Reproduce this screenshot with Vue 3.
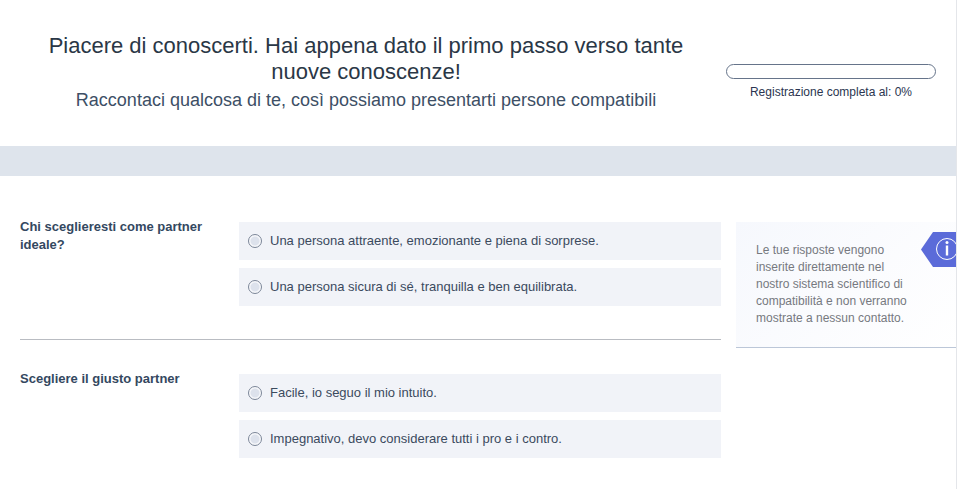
<script setup>
// domande del questionario
const questions = [
  {
    title: 'Chi sceglieresti come partner ideale?',
    answers: [
      'Una persona attraente, emozionante e piena di sorprese.',
      'Una persona sicura di sé, tranquilla e ben equilibrata.'
    ]
  },
  {
    title: 'Scegliere il giusto partner',
    answers: [
      'Facile, io seguo il mio intuito.',
      'Impegnativo, devo considerare tutti i pro e i contro.'
    ]
  }
]
</script>

<template>
  <div class="page">
    <header class="head">
      <div class="head-text">
        <h1>Piacere di conoscerti. Hai appena dato il primo passo verso tante nuove conoscenze!</h1>
        <h2>Raccontaci qualcosa di te, così possiamo presentarti persone compatibili</h2>
      </div>
      <div class="progress">
        <div class="bar"></div>
        <div class="bar-label">Registrazione completa al: 0%</div>
      </div>
    </header>
    <div class="band"></div>
    <main class="content">
      <div class="questions">
        <section v-for="q in questions" :key="q.title" class="question">
          <div class="q-title">{{ q.title }}</div>
          <div class="answers">
            <label v-for="a in q.answers" :key="a" class="answer">
              <span class="radio"></span>
              <span>{{ a }}</span>
            </label>
          </div>
        </section>
      </div>
      <aside class="note">
        <p>Le tue risposte vengono inserite direttamente nel nostro sistema scientifico di compatibilità e non verranno mostrate a nessun contatto.</p>
        <div class="badge">
          <svg width="35" height="35" viewBox="0 0 35 35">
            <path d="M35 0H12L0 17.5 12 35H35Z" fill="#5b6bd9" />
            <circle cx="26" cy="17" r="10.5" fill="none" stroke="#fff" stroke-width="1" />
            <rect x="24.8" y="13.5" width="2.4" height="10" fill="#fff" />
            <circle cx="26" cy="10.5" r="1.5" fill="#fff" />
          </svg>
        </div>
      </aside>
    </main>
  </div>
</template>

<style>
html, body {
  margin: 0;
  background: #fff;
}
</style>

<style scoped>
.page {
  width: 957px;
  height: 489px;
  box-sizing: border-box;
  overflow: hidden;
  border-right: 1px solid #e4e6ea;
  font-family: "Liberation Sans", Arial, sans-serif;
  color: #2e3d50;
}

.head {
  display: flex;
  height: 146px;
  box-sizing: border-box;
  padding-top: 33px;
}

.head-text {
  width: 652px;
  margin-left: 40px;
  text-align: center;
}

h1 {
  margin: 0;
  font-size: 22px;
  line-height: 26px;
  font-weight: 400;
  color: #2a3746;
}

h2 {
  margin: 3px 0 0;
  font-size: 18px;
  line-height: 24px;
  font-weight: 400;
  color: #3d4f66;
}

.progress {
  width: 210px;
  margin: 31px 0 0 34px;
}

.bar {
  height: 13px;
  border: 1px solid #66748a;
  border-radius: 8px;
}

.bar-label {
  margin-top: 5px;
  font-size: 12px;
  line-height: 16px;
  text-align: center;
  color: #2b3550;
}

.band {
  height: 30px;
  background: #dee4ec;
}

.content {
  display: flex;
  padding: 46px 0 0 20px;
}

.questions {
  width: 701px;
}

.question {
  display: flex;
  padding-bottom: 33px;
  margin-bottom: 34px;
  border-bottom: 1px solid #b9bcc2;
}

.question:last-child {
  border-bottom: none;
}

.q-title {
  width: 219px;
  margin-top: -4px;
  padding-right: 20px;
  box-sizing: border-box;
  font-size: 13px;
  line-height: 18px;
  font-weight: 700;
  color: #34485f;
}

.answers {
  width: 482px;
  display: flex;
  flex-direction: column;
  gap: 8px;
}

.answer {
  display: flex;
  align-items: center;
  gap: 8px;
  height: 38px;
  padding: 0 0 2px 9px;
  box-sizing: border-box;
  background: #f1f3f8;
  font-size: 13px;
  color: #3b4a5e;
}

.radio {
  width: 12px;
  height: 12px;
  margin-top: 2px;
  border: 1px solid #7c8698;
  border-radius: 50%;
  background: radial-gradient(circle, #dde2ec 0 4px, #f7f8fb 5px);
}

.note {
  position: relative;
  width: 220px;
  height: 126px;
  box-sizing: border-box;
  margin-left: 15px;
  padding: 20px 45px 0 20px;
  background: linear-gradient(135deg, #f6f8fd, #fff);
  border-bottom: 1px solid #bcc7d8;
}

.note p {
  margin: 0;
  font-size: 12px;
  line-height: 17px;
  color: #76797f;
}

.badge {
  position: absolute;
  top: 10px;
  right: 0;
  width: 35px;
  height: 35px;
}
</style>
